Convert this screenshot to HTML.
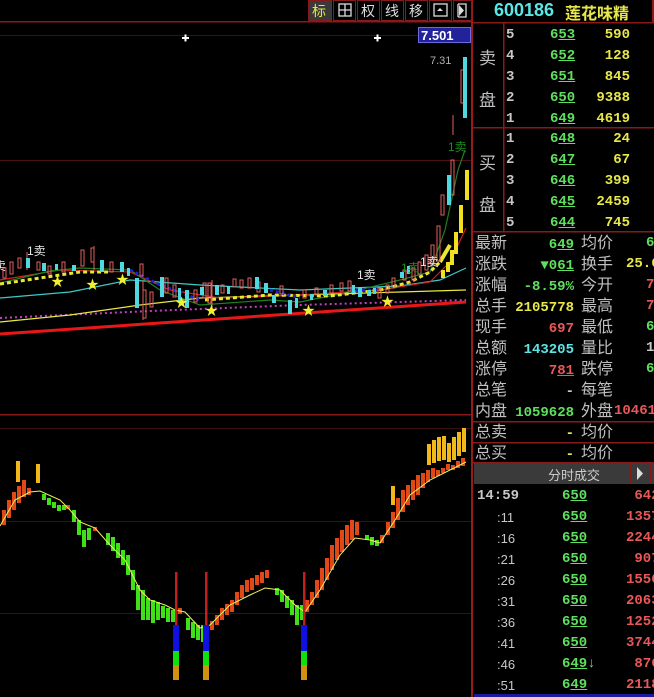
<!DOCTYPE html>
<html><head><meta charset="utf-8"><style>
*{margin:0;padding:0}
body{width:654px;height:697px;background:#000;overflow:hidden;position:relative;font-family:"Liberation Sans","Noto Sans CJK SC",sans-serif}
.a{position:absolute;white-space:nowrap}
.n{font-family:"Liberation Mono","Noto Sans CJK SC",monospace;font-weight:bold;font-size:14px}
.g{color:#5ee05e}.y{color:#e8e84a}.r{color:#e85858}.c{color:#5ce6e6}.w{color:#c8c8c8}
.lb{color:#c0c0c0;font-size:16px}
u{text-decoration:underline}
</style></head><body>
<svg class="a" style="left:0;top:0" width="654" height="697">
<rect x="0" y="21" width="472" height="1.5" fill="#8a1a1a"/>
<rect x="0" y="35" width="472" height="1" fill="#3a1010"/>
<rect x="0" y="160" width="472" height="1" fill="#4a1212"/>
<rect x="0" y="414" width="472" height="1.5" fill="#8a1a1a"/>
<rect x="0" y="428" width="472" height="1" fill="#3a1010"/>
<rect x="0" y="521" width="472" height="1" fill="#3a1010"/>
<rect x="0" y="613" width="472" height="1" fill="#3a1010"/>
<rect x="471" y="0" width="2" height="697" fill="#9a1a1a"/>
<g fill="none" stroke="#8a1a1a">
<rect x="308.5" y="0.5" width="23" height="20"/><rect x="333.5" y="0.5" width="22" height="20"/><rect x="357.5" y="0.5" width="22" height="20"/><rect x="381.5" y="0.5" width="22" height="20"/><rect x="405.5" y="0.5" width="22" height="20"/><rect x="429.5" y="0.5" width="22" height="20"/><rect x="453.5" y="0.5" width="18" height="20"/>
</g>
<rect x="309" y="1" width="22" height="19" fill="#3a3a3a"/>
<g stroke="#ddd" fill="none" stroke-width="1.3"><rect x="339" y="4" width="12" height="12"/><path d="M345 4V16M339 10H351"/><rect x="434" y="4" width="13" height="12"/><path d="M458 4V17M458 4h8v13h-8"/></g>
<path d="M437 11l3-3 3 3z" fill="#ddd"/><path d="M459 5l5 5.5-5 5.5z" fill="#ddd"/>
<rect x="418.5" y="27.5" width="52" height="15" fill="#22229a" stroke="#6b6bdc"/>
<g fill="#fff"><rect x="182" y="37" width="7" height="2"/><rect x="184.5" y="34.5" width="2" height="7"/><rect x="374" y="37" width="7" height="2"/><rect x="376.5" y="34.5" width="2" height="7"/></g>
<path d="M0 334L466 302" stroke="#e81818" stroke-width="3" fill="none"/>
<path d="M0 318L150 311L300 305L466 300" stroke="#c040c0" stroke-width="2" stroke-dasharray="2 3" fill="none"/>
<path d="M0 322L70 315L140 305L200 298L300 295L400 292L466 290" stroke="#e8e840" stroke-width="1.2" fill="none"/>
<path d="M0 298L70 292L130 280L200 285L300 290L400 286L440 280L466 268" stroke="#40c8c8" stroke-width="1.2" fill="none"/>
<path d="M0 280L60 270L130 272L170 290L220 298L300 295L380 290L430 282L450 262L466 228" stroke="#d02020" stroke-width="1.2" fill="none"/>
<path d="M0 283L50 271L80 268L130 270L160 290L200 305L270 300L300 302L350 292L400 280L430 272L445 230L458 170L465 150" stroke="#208020" stroke-width="1.2" fill="none"/>
<path d="M0 284L40 278L80 272L110 272" stroke="#e8e830" stroke-width="3" stroke-dasharray="4 3" fill="none"/>
<path d="M205 300L270 295L330 296L380 290L410 282L430 272L440 262" stroke="#e8e830" stroke-width="3" stroke-dasharray="4 3" fill="none"/>
<path d="M440 262L450 245" stroke="#e8e830" stroke-width="4" fill="none"/>
<path d="M130 270L160 285L200 300M270 290L300 298M350 290L380 290" stroke="#2020d0" stroke-width="3" stroke-dasharray="3 3" fill="none"/>
<g stroke="#e06060" fill="none">
<rect x="10" y="262" width="3" height="12"/><rect x="18" y="258" width="3" height="10"/><rect x="37" y="262" width="3" height="8"/><rect x="81" y="250" width="3" height="16"/><rect x="91" y="248" width="3" height="14"/><rect x="140" y="264" width="3" height="12"/><rect x="143" y="290" width="3" height="28"/><rect x="150" y="292" width="3" height="15"/><rect x="173" y="285" width="3" height="12"/><rect x="203" y="283" width="3" height="15"/><rect x="208" y="283" width="3" height="20"/><rect x="233" y="279" width="3" height="8"/><rect x="240" y="280" width="3" height="8"/><rect x="248" y="278" width="3" height="10"/><rect x="257" y="282" width="3" height="10"/><rect x="303" y="290" width="3" height="8"/><rect x="330" y="285" width="3" height="8"/><rect x="348" y="281" width="3" height="10"/><rect x="378" y="288" width="3" height="10"/><rect x="392" y="278" width="3" height="10"/><rect x="412" y="268" width="3" height="12"/><rect x="418" y="262" width="3" height="12"/><rect x="425" y="255" width="3" height="15"/><rect x="437" y="226" width="3" height="35"/><rect x="441" y="195" width="3" height="20"/><rect x="451" y="160" width="3" height="35"/><rect x="461" y="70" width="3" height="33"/>
<rect x="3" y="268" width="3" height="10"/><rect x="48" y="266" width="3" height="8"/><rect x="62" y="262" width="3" height="10"/><rect x="110" y="262" width="3" height="10"/><rect x="165" y="278" width="3" height="15"/><rect x="194" y="290" width="3" height="12"/><rect x="221" y="285" width="3" height="8"/><rect x="280" y="286" width="3" height="8"/><rect x="315" y="288" width="3" height="6"/><rect x="340" y="283" width="3" height="8"/><rect x="386" y="285" width="3" height="8"/><rect x="403" y="270" width="3" height="10"/><rect x="431" y="245" width="3" height="20"/>
<path d="M453 115V135M143 280V320M212 280V310M27 252V270M94 246V270"/>
</g>
<g fill="#50d8e0">
<rect x="26" y="258" width="4" height="10"/><rect x="42" y="263" width="4" height="8"/><rect x="72" y="265" width="4" height="6"/><rect x="100" y="260" width="4" height="12"/><rect x="120" y="262" width="4" height="10"/><rect x="135" y="278" width="4" height="30"/><rect x="160" y="277" width="4" height="20"/><rect x="185" y="290" width="4" height="18"/><rect x="200" y="287" width="4" height="8"/><rect x="215" y="285" width="4" height="10"/><rect x="255" y="277" width="4" height="12"/><rect x="264" y="283" width="4" height="10"/><rect x="272" y="295" width="4" height="8"/><rect x="288" y="300" width="4" height="14"/><rect x="323" y="290" width="4" height="6"/><rect x="358" y="287" width="4" height="10"/><rect x="367" y="290" width="4" height="6"/><rect x="400" y="272" width="4" height="6"/><rect x="447" y="175" width="4" height="30"/><rect x="463" y="57" width="4" height="61"/>
<rect x="55" y="264" width="3" height="6"/><rect x="127" y="268" width="3" height="8"/><rect x="178" y="288" width="3" height="14"/><rect x="227" y="286" width="3" height="8"/><rect x="295" y="298" width="3" height="10"/><rect x="310" y="294" width="3" height="6"/><rect x="352" y="285" width="3" height="8"/><rect x="373" y="288" width="3" height="6"/><rect x="407" y="266" width="3" height="8"/></g>
<g fill="#f0e020">
<rect x="465" y="170" width="4" height="30"/><rect x="459" y="205" width="4" height="28"/><rect x="454" y="232" width="4" height="22"/><rect x="450" y="250" width="4" height="15"/><rect x="446" y="262" width="4" height="10"/><rect x="441" y="270" width="4" height="8"/>
</g>
<g fill="#f0f030" font-size="13"><text x="51" y="286">★</text><text x="86" y="289">★</text><text x="116" y="284">★</text><text x="175" y="307">★</text><text x="205" y="315">★</text><text x="302" y="315">★</text><text x="381" y="306">★</text></g>
<g font-family="Liberation Sans,Noto Sans CJK SC,sans-serif" font-size="12"><text x="27" y="255" fill="#e8e8e8">1卖</text><text x="357" y="279" fill="#e8e8e8">1卖</text><text x="420" y="266" fill="#e8e8e8">1卖</text><text x="-6" y="270" fill="#e8e8e8">卖</text><text x="448" y="151" fill="#189018">1卖</text><text x="401" y="272" fill="#189018">1卖</text><text x="430" y="64" fill="#b0b0b0" font-size="11">7.31</text><text x="421" y="40" fill="#fff" font-size="13" font-weight="bold">7.501</text></g>
<g fill="#f0b818"><rect x="16" y="461" width="4" height="21"/><rect x="36" y="464" width="4" height="19"/><rect x="391" y="486" width="4" height="19"/><rect x="427" y="444" width="4" height="21"/><rect x="432" y="440" width="4" height="23"/><rect x="437" y="437" width="4" height="24"/><rect x="442" y="436" width="4" height="24"/><rect x="447" y="443" width="4" height="19"/><rect x="452" y="437" width="4" height="23"/><rect x="457" y="432" width="4" height="24"/><rect x="462" y="428" width="4" height="24"/></g>
<g fill="#e04818">
<rect x="2" y="510" width="4" height="15"/><rect x="7" y="500" width="4" height="18"/><rect x="12" y="492" width="4" height="18"/><rect x="17" y="486" width="4" height="17"/><rect x="22" y="480" width="4" height="17"/><rect x="27" y="488" width="4" height="7"/><rect x="66" y="505" width="4" height="4"/><rect x="93" y="527" width="4" height="4"/><rect x="178" y="608" width="4" height="6"/>
<rect x="210" y="621" width="4" height="9"/><rect x="215" y="615" width="4" height="10"/><rect x="220" y="608" width="4" height="12"/><rect x="225" y="604" width="4" height="11"/><rect x="230" y="600" width="4" height="12"/><rect x="235" y="592" width="4" height="13"/><rect x="240" y="585" width="4" height="13"/><rect x="245" y="580" width="4" height="12"/><rect x="250" y="578" width="4" height="12"/><rect x="255" y="575" width="4" height="10"/><rect x="260" y="572" width="4" height="11"/><rect x="265" y="570" width="4" height="8"/>
<rect x="305" y="600" width="4" height="12"/><rect x="310" y="592" width="4" height="13"/><rect x="315" y="580" width="4" height="18"/><rect x="320" y="568" width="4" height="22"/><rect x="325" y="558" width="4" height="22"/><rect x="330" y="545" width="4" height="25"/><rect x="335" y="538" width="4" height="22"/><rect x="340" y="530" width="4" height="22"/><rect x="345" y="525" width="4" height="20"/><rect x="350" y="520" width="4" height="20"/><rect x="355" y="522" width="4" height="13"/><rect x="380" y="535" width="4" height="8"/>
<rect x="386" y="522" width="4" height="13"/><rect x="391" y="512" width="4" height="16"/><rect x="396" y="498" width="4" height="22"/><rect x="401" y="490" width="4" height="22"/><rect x="406" y="485" width="4" height="20"/><rect x="411" y="480" width="4" height="20"/><rect x="416" y="475" width="4" height="20"/><rect x="421" y="473" width="4" height="15"/><rect x="426" y="470" width="4" height="12"/><rect x="431" y="468" width="4" height="10"/><rect x="436" y="470" width="4" height="6"/><rect x="441" y="468" width="4" height="5"/><rect x="446" y="464" width="4" height="6"/><rect x="451" y="465" width="4" height="5"/><rect x="456" y="461" width="4" height="7"/><rect x="461" y="458" width="4" height="8"/>
</g>
<g fill="#40e018">
<rect x="42" y="494" width="4" height="6"/><rect x="47" y="498" width="4" height="7"/><rect x="52" y="502" width="4" height="6"/><rect x="57" y="505" width="4" height="6"/><rect x="62" y="505" width="4" height="5"/>
<rect x="72" y="510" width="4" height="12"/><rect x="77" y="520" width="4" height="15"/><rect x="82" y="530" width="4" height="17"/><rect x="87" y="528" width="4" height="12"/>
<rect x="106" y="533" width="4" height="12"/><rect x="111" y="537" width="4" height="14"/><rect x="116" y="543" width="4" height="15"/><rect x="121" y="550" width="4" height="15"/><rect x="126" y="555" width="4" height="20"/><rect x="131" y="570" width="4" height="20"/><rect x="136" y="585" width="4" height="25"/><rect x="141" y="590" width="4" height="30"/><rect x="146" y="598" width="4" height="22"/><rect x="151" y="600" width="4" height="23"/><rect x="156" y="602" width="4" height="18"/><rect x="161" y="606" width="4" height="12"/><rect x="166" y="608" width="4" height="14"/><rect x="171" y="610" width="4" height="12"/>
<rect x="186" y="618" width="4" height="12"/><rect x="191" y="622" width="4" height="16"/><rect x="196" y="625" width="4" height="15"/><rect x="201" y="625" width="4" height="17"/>
<rect x="275" y="588" width="4" height="7"/><rect x="280" y="590" width="4" height="12"/><rect x="285" y="596" width="4" height="12"/><rect x="290" y="600" width="4" height="15"/><rect x="295" y="605" width="4" height="20"/><rect x="300" y="605" width="4" height="15"/>
<rect x="365" y="535" width="4" height="5"/><rect x="370" y="537" width="4" height="8"/><rect x="375" y="540" width="4" height="6"/>
</g>
<path d="M0 526L15 500L30 492L40 491L60 500L70 510L80 522L95 528L110 545L125 560L140 590L150 600L165 605L175 610L185 612L200 628L210 625L230 605L250 595L265 588L280 590L295 605L305 612L320 590L340 555L355 538L370 540L380 543L395 520L410 495L430 480L450 470L466 462" stroke="#f0f060" stroke-width="1" fill="none"/>
<g><rect x="175" y="572" width="2.5" height="53" fill="#c02020"/><rect x="205" y="572" width="2.5" height="53" fill="#c02020"/><rect x="303" y="572" width="2.5" height="53" fill="#c02020"/>
<g fill="#1010e0"><rect x="173" y="625" width="6" height="26"/><rect x="203" y="625" width="6" height="26"/><rect x="301" y="625" width="6" height="26"/></g>
<g fill="#10e010"><rect x="173" y="651" width="6" height="14"/><rect x="203" y="651" width="6" height="14"/><rect x="301" y="651" width="6" height="14"/></g>
<g fill="#d09010"><rect x="173" y="665" width="6" height="15"/><rect x="203" y="665" width="6" height="15"/><rect x="301" y="665" width="6" height="15"/></g></g>
<g fill="#8a1a1a"><rect x="473" y="22" width="181" height="1.5"/><rect x="473" y="127" width="181" height="1.5"/><rect x="473" y="231" width="181" height="1.5"/><rect x="473" y="421" width="181" height="1.5"/><rect x="473" y="442" width="181" height="1.5"/><rect x="473" y="462" width="181" height="1.5"/><rect x="503" y="22" width="1.5" height="209"/><rect x="652" y="0" width="2" height="22"/></g>
<rect x="474" y="463" width="180" height="21" fill="#3a3a3a"/>
<rect x="630.5" y="463.5" width="20" height="20" fill="none" stroke="#8a1a1a"/>
<path d="M637 467l6 6.5-6 6.5z" fill="#ddd"/>
<rect x="474" y="694" width="180" height="3" fill="#1a1a9a"/>
</svg>
<div class="a" style="left:312px;top:1px;font-size:14px;color:#e8e840">标</div>
<div class="a" style="left:361px;top:1px;font-size:14px;color:#ddd">权</div>
<div class="a" style="left:385px;top:1px;font-size:14px;color:#ddd">线</div>
<div class="a" style="left:409px;top:1px;font-size:14px;color:#ddd">移</div>
<div class="a c" style="left:494px;top:0px;font-size:18px;font-weight:bold;font-family:'Liberation Sans',sans-serif">600186</div>
<div class="a y" style="left:565px;top:0px;font-size:16px;font-weight:bold">莲花味精</div>
<div class="a lb" style="left:479px;top:44px;font-size:17px">卖</div><div class="a lb" style="left:479px;top:86px;font-size:17px">盘</div>
<div class="a lb" style="left:479px;top:149px;font-size:17px">买</div><div class="a lb" style="left:479px;top:191px;font-size:17px">盘</div>
<div class="a n w" style="left:506px;top:25px;line-height:21px">5<br>4<br>3<br>2<br>1</div>
<div class="a n g" style="left:550px;top:25px;line-height:21px">6<u>53</u><br>6<u>52</u><br>6<u>51</u><br>6<u>50</u><br>6<u>49</u></div>
<div class="a n y" style="right:24px;top:25px;line-height:21px;text-align:right">590<br>128<br>845<br>9388<br>4619</div>
<div class="a n w" style="left:506px;top:129px;line-height:21px">1<br>2<br>3<br>4<br>5</div>
<div class="a n g" style="left:550px;top:129px;line-height:21px">6<u>48</u><br>6<u>47</u><br>6<u>46</u><br>6<u>45</u><br>6<u>44</u></div>
<div class="a n y" style="right:24px;top:129px;line-height:21px;text-align:right">24<br>67<br>399<br>2459<br>745</div>
<div class="a lb" style="left:475px;top:233px;line-height:21px">最新<br>涨跌<br>涨幅<br>总手<br>现手<br>总额<br>涨停<br>总笔<br>内盘<br>总卖<br>总买</div>
<div class="a n" style="right:80px;top:235px;line-height:21px;text-align:right"><span class="g">6<u>49</u></span><br><span class="g">▼0<u>61</u></span><br><span class="g">-8.59%</span><br><span class="y">2105778</span><br><span class="r">697</span><br><span class="c">143205</span><br><span class="r">7<u>81</u></span><br><span class="w">-</span><br><span class="g">1059628</span><br><span class="y">-</span><br><span class="y">-</span></div>
<div class="a lb" style="left:581px;top:233px;line-height:21px">均价<br>换手<br>今开<br>最高<br>最低<br>量比<br>跌停<br>每笔<br>外盘<br>均价<br>均价</div>
<div class="a n g" style="left:646px;top:235px">6</div>
<div class="a n y" style="left:626px;top:256px">25.6</div>
<div class="a n r" style="left:646px;top:277px">7</div><div class="a n r" style="left:646px;top:298px">7</div>
<div class="a n g" style="left:646px;top:319px">6</div><div class="a n w" style="left:646px;top:340px">1</div>
<div class="a n g" style="left:646px;top:361px">6</div>
<div class="a n r" style="left:614px;top:403px">10461</div>
<div class="a" style="left:548px;top:465px;font-size:13px;color:#ccc">分时成交</div>
<div class="a n w" style="left:477px;top:486px;line-height:21px">14:59</div>
<div class="a w" style="left:497px;top:507px;line-height:21px;font-size:13px;font-family:'Liberation Sans',sans-serif">:11<br>:16<br>:21<br>:26<br>:31<br>:36<br>:41<br>:46<br>:51</div>
<div class="a n g" style="left:562px;top:486px;line-height:21px">6<u>50</u><br>6<u>50</u><br>6<u>50</u><br>6<u>50</u><br>6<u>50</u><br>6<u>50</u><br>6<u>50</u><br>6<u>50</u><br>6<u>49</u>↓<br>6<u>49</u></div>
<div class="a n r" style="left:626px;top:486px;line-height:21px">&nbsp;642<br>1357<br>2244<br>&nbsp;907<br>1556<br>2063<br>1252<br>3744<br>&nbsp;876<br>2118</div>
</body></html>
